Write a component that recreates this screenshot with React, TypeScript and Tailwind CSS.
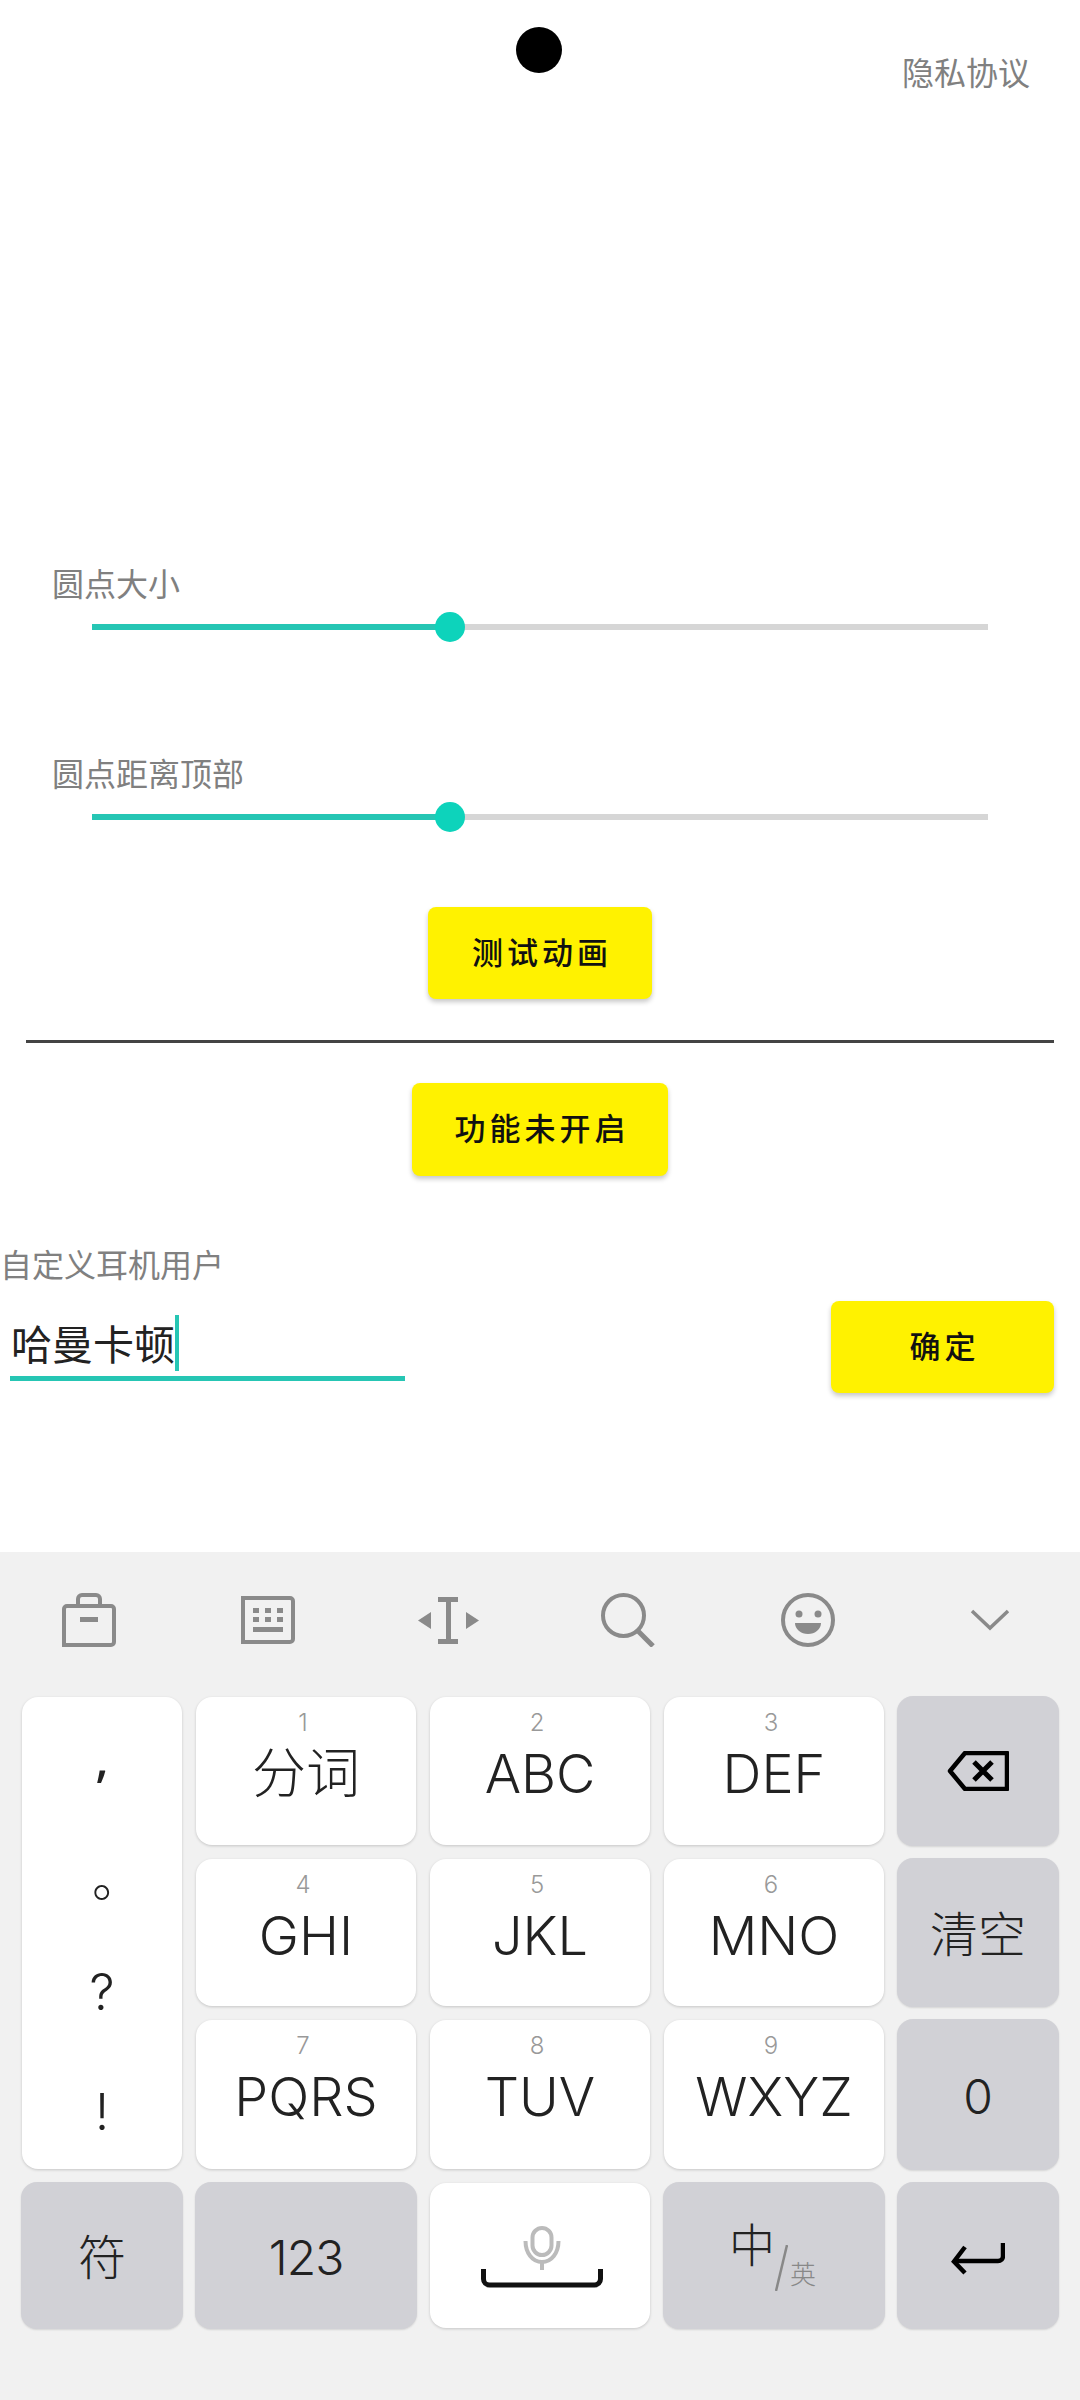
const CJK = "font-['Inter','Noto_Sans_CJK_SC',sans-serif]";

const TEAL = "bg-[#26c6b4]";

function Slider({ label, className }: { label: string; className: string }) {
  return (
    <div className={className}>
      <div className="pl-[52px] text-[32px] leading-[36px] text-[#808080]">{label}</div>
      <div className="relative mt-[21px] ml-[92px] h-[6px] w-[896px] bg-[#d6d6d6]">
        <div className={`h-full w-[358px] ${TEAL}`} />
        <div className="absolute left-[343px] top-[-12px] h-[30px] w-[30px] rounded-full bg-[#0dd3bb]" />
      </div>
    </div>
  );
}

function YellowButton({ text, className }: { text: string; className: string }) {
  return (
    <button
      type="button"
      className={`flex items-center justify-center rounded-[8px] bg-[#fff200] pl-[4px] text-[31px] font-medium tracking-[4px] text-[#111] shadow-[0_3px_5px_rgba(0,0,0,0.22)] ${className}`}
    >
      {text}
    </button>
  );
}

function Key({ digit, label }: { digit: string; label: string }) {
  return (
    <div className="flex flex-col items-center rounded-[16px] bg-white pt-[11px] shadow-[0_1px_3px_rgba(0,0,0,0.18)]">
      <span className="pr-[6px] text-[24px] font-light leading-[30px] text-[#999]">{digit}</span>
      <span className="mt-[3px] text-[54px] font-light leading-[66px] text-[#222]">{label}</span>
    </div>
  );
}

function GrayKey({ children, text }: { children: React.ReactNode; text?: boolean }) {
  return (
    <div
      className={`-m-px flex items-center justify-center rounded-[16px] bg-[#d1d1d6] text-[48px] font-light text-[#222] shadow-[0_1px_2px_rgba(0,0,0,0.12)] ${text ? "pt-[4px]" : ""}`}
    >
      {children}
    </div>
  );
}

const toolbar = [
  <svg key="case" width="54" height="54" viewBox="0 0 54 54" fill="none" stroke="#8a8a8a" strokeWidth="4">
    <path d="M2 52V16a3 3 0 0 1 3-3h44a3 3 0 0 1 3 3v33a3 3 0 0 1-3 3z" />
    <path d="M16 13V6a4 4 0 0 1 4-4h14a4 4 0 0 1 4 4v7" />
    <rect x="18" y="24" width="18" height="5" fill="#8a8a8a" stroke="none" />
  </svg>,
  <svg key="kb" className="ml-[125px]" width="54" height="48" viewBox="0 0 54 48" fill="#8a8a8a">
    <path d="M2 46V2h47a3 3 0 0 1 3 3v38a3 3 0 0 1-3 3z" fill="none" stroke="#8a8a8a" strokeWidth="4" />
    <rect x="12" y="12" width="6" height="5" />
    <rect x="24" y="12" width="6" height="5" />
    <rect x="36" y="12" width="6" height="5" />
    <rect x="12" y="21" width="6" height="5" />
    <rect x="24" y="21" width="6" height="5" />
    <rect x="36" y="21" width="6" height="5" />
    <rect x="12" y="31" width="30" height="5" />
  </svg>,
  <svg key="cursor" className="ml-[123px]" width="61" height="47" viewBox="0 0 61 47" fill="#8a8a8a">
    <path d="M0 23.5 13 15v17z" />
    <path d="M61 23.5 48 15v17z" />
    <path d="M20 0h20v5h-7v37h7v5H20v-5h8V5h-8z" />
  </svg>,
  <svg key="search" className="ml-[122px]" width="54" height="54" viewBox="0 0 54 54" fill="none" stroke="#8a8a8a">
    <circle cx="22.5" cy="22.5" r="20.5" strokeWidth="4" />
    <path d="M37 38 52 53" strokeWidth="5" />
  </svg>,
  <svg key="emoji" className="ml-[126px]" width="54" height="54" viewBox="0 0 54 54" fill="#8a8a8a">
    <circle cx="27" cy="27" r="25" fill="none" stroke="#8a8a8a" strokeWidth="4" />
    <circle cx="18" cy="21" r="3.5" />
    <circle cx="37" cy="21" r="3.5" />
    <path d="M14 30h26a13 11 0 0 1-26 0z" />
  </svg>,
  <svg key="down" className="ml-[135px]" width="40" height="22" viewBox="0 0 40 22" fill="none" stroke="#8a8a8a" strokeWidth="3.5">
    <path d="M2 2 20 19 38 2" />
  </svg>,
];

export default function App() {
  return (
    <div className={`relative flex h-[2400px] w-[1080px] flex-col overflow-hidden bg-white ${CJK}`}>
      <div className="absolute left-[516px] top-[27px] h-[46px] w-[46px] rounded-full bg-black" />

      <div className="flex justify-end pr-[50px] pt-[56px] text-[32px] leading-[36px] text-[#808080]">隐私协议</div>

      <Slider label="圆点大小" className="mt-[475px]" />
      <Slider label="圆点距离顶部" className="mt-[127px]" />

      <YellowButton text="测试动画" className="mt-[87px] h-[92px] w-[224px] self-center" />
      <div className="mx-[26px] mt-[41px] h-[3px] bg-[#444]" />
      <YellowButton text="功能未开启" className="mt-[40px] h-[93px] w-[256px] self-center" />

      <div className="mt-[72px] text-[32px] leading-[36px] text-[#808080]">自定义耳机用户</div>
      <div className="mt-[17px] flex items-start justify-between pr-[26px]">
        <div className="ml-[10px] mt-[14px] flex w-[395px] items-center border-b-[5px] border-[#26c6b4] pb-[5px] pl-[1px] text-[41px] text-[#222]">
          <span className="pt-[4px] leading-[52px]">哈曼卡顿</span>
          <span className={`h-[56px] w-[4px] ${TEAL}`} />
        </div>
        <YellowButton text="确定" className="h-[92px] w-[223px]" />
      </div>

      <div className="mt-auto flex h-[848px] flex-col bg-[#f1f1f1]">
        <div className="flex h-[145px] items-center pb-[9px] pl-[62px]">{toolbar}</div>

        <div className="ml-[22px] grid grid-cols-[160px_220px_220px_220px_160px] grid-rows-[148px_147px_149px_145px] gap-x-[14px] gap-y-[14px]">
          <div className="row-span-3 flex flex-col rounded-[16px] bg-white pt-[4px] text-[50px] font-light text-[#222] shadow-[0_1px_3px_rgba(0,0,0,0.18)]">
            <div className="flex flex-1 items-center justify-center font-['Noto_Sans'] font-medium">,</div>
            <div className="flex flex-1 items-center justify-center pl-[30px] pt-[10px]">。</div>
            <div className="flex flex-1 items-center justify-center pb-[6px]">?</div>
            <div className="flex flex-1 items-center justify-center pt-[2px]">!</div>
          </div>
          <Key digit="1" label="分词" />
          <Key digit="2" label="ABC" />
          <Key digit="3" label="DEF" />
          <GrayKey>
            <svg width="62" height="40" viewBox="0 0 62 40" fill="none" stroke="#000" strokeLinejoin="round">
              <path d="M60 2H18L3 20l15 18h42z" strokeWidth="4.5" />
              <path d="M27 11 45 29M45 11 27 29" strokeWidth="5" />
            </svg>
          </GrayKey>

          <Key digit="4" label="GHI" />
          <Key digit="5" label="JKL" />
          <Key digit="6" label="MNO" />
          <GrayKey text>清空</GrayKey>

          <Key digit="7" label="PQRS" />
          <Key digit="8" label="TUV" />
          <Key digit="9" label="WXYZ" />
          <GrayKey text>0</GrayKey>

          <GrayKey text>符</GrayKey>
          <GrayKey text>
            <span className="tracking-[-1px]">123</span>
          </GrayKey>
          <div className="flex flex-col items-center rounded-[16px] bg-white pl-[3px] pt-[43px] shadow-[0_1px_3px_rgba(0,0,0,0.18)]">
            <svg width="38" height="44" viewBox="0 0 38 44" fill="none" stroke="#bbb" strokeWidth="4">
              <rect x="9.500" y="2" width="19" height="27" rx="9.500" />
              <path d="M2.500 15c0 12 7 21 16.500 21s16.500-9 16.500-21M19 36v8" />
            </svg>
            <svg className="-mt-px" width="122" height="19" viewBox="0 0 122 19" fill="none" stroke="#111" strokeWidth="5">
              <path d="M2.500 0v10a6 6 0 0 0 6 6h105a6 6 0 0 0 6-6V0" />
            </svg>
          </div>
          <div className="-m-px flex items-start rounded-[16px] bg-[#d1d1d6] pl-[66px] pt-[35px] shadow-[0_1px_2px_rgba(0,0,0,0.12)]">
            <span className="text-[46px] font-light leading-[56px] text-[#222]">中</span>
            <svg className="mt-[28px]" width="13" height="46" viewBox="0 0 13 46" fill="none" stroke="#888" strokeWidth="2.5">
              <path d="M12 0 1 46" />
            </svg>
            <span className="ml-[2px] mt-[43px] text-[26px] font-light leading-[30px] text-[#888]">英</span>
          </div>
          <GrayKey>
            <svg className="mt-[7px]" width="54" height="32" viewBox="0 0 54 32" fill="none" stroke="#000" strokeWidth="4.5">
              <path d="M52 0v13a5 5 0 0 1-5 5H3" />
              <path d="M14 4 3 18.5 14 30" />
            </svg>
          </GrayKey>
        </div>
      </div>
    </div>
  );
}
